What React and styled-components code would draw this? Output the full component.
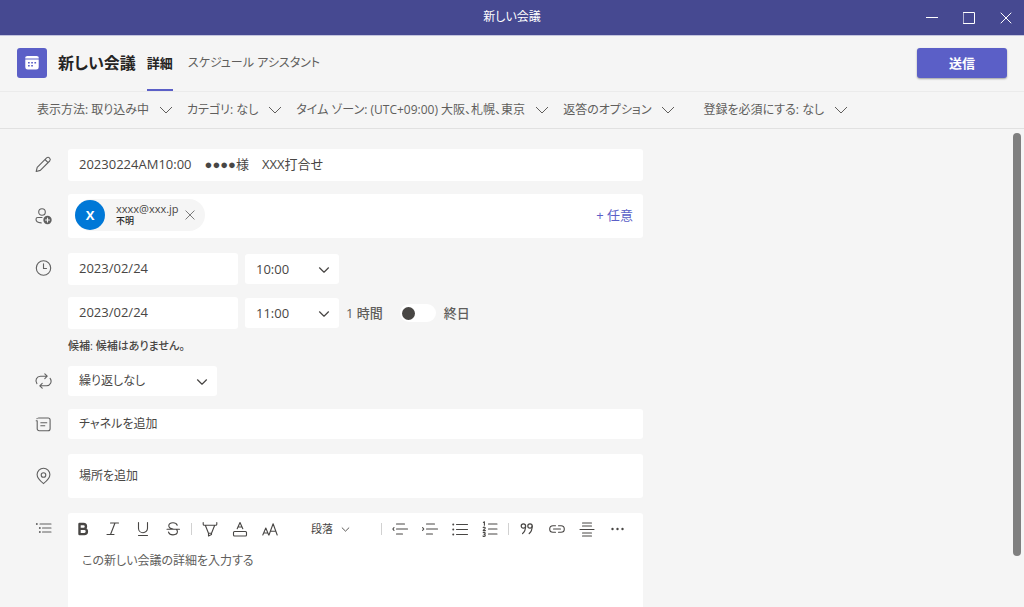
import React from "react";
import styled, { createGlobalStyle } from "styled-components";

const GlobalStyle = createGlobalStyle`
  *, *::before, *::after {
    box-sizing: border-box;
  }

  body {
    margin: 0;
    background-color: #f5f5f5;
    color: #484644;
    font-family: "Open Sans", "Liberation Sans", "Noto Sans CJK JP", sans-serif;
    font-size: 13px;
    line-height: 20px;
    font-feature-settings: "palt";
  }

  button, input, select, textarea {
    margin: 0;
    padding: 0;
    border: 0;
    background: none;
    color: inherit;
    font: inherit;
    font-feature-settings: inherit;
  }

  h1 {
    margin: 0;
  }
`;

const Window = styled.div`
  display: flex;
  flex-direction: column;
  height: 100vh;
  overflow: hidden;
`;

const TitleBar = styled.div`
  display: grid;
  grid-template-columns: 1fr auto 1fr;
  align-items: center;
  flex: none;
  height: 35px;
  background-color: #464991;
  color: #ffffff;
`;

const TitleText = styled.div`
  grid-column: 2;
  padding-bottom: 2px;
  font-size: 12px;
`;

const WindowControls = styled.div`
  display: flex;
  justify-content: flex-end;
`;

const WindowButton = styled.button`
  display: flex;
  align-items: center;
  justify-content: center;
  width: 37px;
  height: 32px;
`;

const Header = styled.header`
  display: flex;
  align-items: center;
  flex: none;
  height: 57px;
  padding: 0 17px;
  border-bottom: 1px solid #ebebeb;
  box-shadow: inset 0 1px 0 #c3c4de;
`;

const AppBadge = styled.div`
  display: flex;
  align-items: center;
  justify-content: center;
  width: 30px;
  height: 30px;
  margin-right: 11px;
  background-color: #5b5fc7;
  border-radius: 3px;
  color: #ffffff;
`;

const Heading = styled.h1`
  margin-right: 11px;
  color: #252423;
  font-size: 16px;
  font-weight: 600;
  line-height: 24px;
`;

const Tabs = styled.nav`
  display: flex;
  flex: 1;
  align-self: stretch;
  gap: 15px;
`;

const Tab = styled.button`
  border-top: 2px solid transparent;
  border-bottom: 2px solid ${({ $active }) => ($active ? "#5b5fc7" : "transparent")};
  color: ${({ $active }) => ($active ? "#252423" : "#605e5c")};
  font-size: ${({ $active }) => ($active ? 13 : 12)}px;
  font-weight: ${({ $active }) => ($active ? 600 : 400)};
`;

const SendButton = styled.button`
  width: 90px;
  height: 30px;
  background-color: #5b5fc7;
  border-radius: 3px;
  box-shadow: 0 1px 2px rgba(0, 0, 0, 0.35);
  color: #ffffff;
  font-weight: 700;
`;

const OptionBar = styled.div`
  display: flex;
  align-items: center;
  flex: none;
  gap: 14px;
  height: 37px;
  padding: 0 37px;
  border-bottom: 1px solid #e1e1e1;
`;

const OptionButton = styled.button`
  display: flex;
  align-items: center;
  gap: 10px;
  color: #605e5c;
  font-size: 12px;
  white-space: nowrap;

  &:last-child {
    margin-left: 14px;
  }
`;

const Body = styled.main`
  display: flex;
  flex: 1;
  min-height: 0;
  overflow: hidden;
`;

const Form = styled.form`
  flex: 1;
  padding: 20px 24px 0 34px;
`;

const Row = styled.div`
  display: flex;
  max-width: 609px;
  margin-bottom: ${({ $loose }) => ($loose ? 15 : 13)}px;
`;

const RowIcon = styled.div`
  display: flex;
  align-items: center;
  flex: none;
  width: 34px;
  height: ${({ $height }) => $height}px;
  color: #616161;
`;

const RowContent = styled.div`
  flex: 1;
  min-width: 0;
`;

const TextField = styled.input`
  display: block;
  width: ${({ $width }) => $width || "100%"};
  height: ${({ $height }) => $height || 32}px;
  padding: 0 11px 3px;
  background-color: #ffffff;
  border-radius: 3px;

  &::placeholder {
    color: #484644;
    font-size: 12px;
    opacity: 1;
  }
`;

const Attendees = styled.div`
  display: flex;
  align-items: center;
  justify-content: space-between;
  height: 44px;
  padding: 0 10px 2px 7px;
  background-color: #ffffff;
  border-radius: 3px;
`;

const Chip = styled.div`
  display: flex;
  align-items: center;
  height: 32px;
  padding-right: 10px;
  background-color: #f5f5f5;
  border-radius: 16px;
`;

const Avatar = styled.div`
  width: 30px;
  height: 30px;
  margin-right: 11px;
  background-color: #0078d7;
  border-radius: 50%;
  color: #ffffff;
  font-weight: 700;
  line-height: 30px;
  text-align: center;
`;

const ChipText = styled.div`
  font-size: 11px;
  line-height: 12px;
`;

const ChipStatus = styled.div`
  color: #252423;
  font-size: 9px;
  font-weight: 500;
  line-height: 12px;
`;

const ChipClose = styled.button`
  display: flex;
  margin-left: 6px;
  color: #616161;
`;

const OptionalButton = styled.button`
  color: #5b5fc7;
`;

const TimeLine = styled.div`
  display: flex;
  align-items: center;
  gap: 7px;
  margin-bottom: ${({ $last }) => ($last ? 10 : 12)}px;
`;

const SelectWrap = styled.div`
  position: relative;
  width: ${({ $width }) => $width}px;
  color: #484644;

  & svg {
    position: absolute;
    top: 10px;
    right: 9px;
    pointer-events: none;
  }
`;

const SelectField = styled.select`
  appearance: none;
  display: block;
  width: 100%;
  height: 30px;
  padding: 0 11px;
  background-color: #ffffff;
  border-radius: 3px;
  font-size: ${({ $small }) => ($small ? 12 : 13)}px;
`;

const Duration = styled.span`
  color: #605e5c;
  font-weight: 500;
`;

const AllDay = styled.label`
  display: flex;
  align-items: center;
  gap: 8px;
  margin-left: 10px;
  color: #605e5c;
  font-weight: 500;
`;

const Toggle = styled.input`
  appearance: none;
  display: flex;
  align-items: center;
  width: 36px;
  height: 18px;
  padding: 0 2px;
  background-color: #ffffff;
  border-radius: 9px;

  &::before {
    content: "";
    width: 13px;
    height: 13px;
    background-color: #484644;
    border-radius: 50%;
  }

  &:checked {
    justify-content: flex-end;
  }
`;

const Hint = styled.div`
  color: #484644;
  font-size: 11px;
  font-weight: 500;
  line-height: 14px;
`;

const Editor = styled.div`
  background-color: #ffffff;
  border-radius: 3px;
`;

const Toolbar = styled.div`
  display: flex;
  align-items: center;
  height: 32px;
  color: #484644;
`;

const ToolButton = styled.button`
  display: flex;
  align-items: center;
  justify-content: center;
  width: 30px;
  height: 30px;
`;

const Separator = styled.div`
  width: 1px;
  height: 12px;
  margin: 0 3px;
  background-color: #d1d1d1;
`;

const ParagraphButton = styled.button`
  display: flex;
  align-items: center;
  gap: 8px;
  width: 93px;
  padding-left: 26px;
  font-size: 11px;
`;

const EditorText = styled.textarea`
  display: block;
  width: 100%;
  height: 160px;
  padding: 6px 14px;
  font-size: 12px;
  resize: none;

  &::placeholder {
    color: #605e5c;
    opacity: 1;
  }
`;

const ScrollTrack = styled.div`
  flex: none;
  width: 11px;
  padding: 4px 0;
`;

const ScrollThumb = styled.div`
  width: 8px;
  height: 90%;
  background-color: #7f7f7f;
  border-radius: 4px;
`;

const Icon = ({ size = 18, box = 18, children, ...rest }) => (
  <svg
    width={size}
    height={size}
    viewBox={`0 0 ${box} ${box}`}
    fill="none"
    stroke="currentColor"
    strokeWidth="1.1"
    strokeLinecap="round"
    strokeLinejoin="round"
    aria-hidden="true"
    {...rest}
  >
    {children}
  </svg>
);

const WideChevron = () => (
  <svg width="14" height="8" viewBox="0 0 14 8" fill="none" stroke="currentColor" aria-hidden="true">
    <path d="M1 1l6 6 6-6" />
  </svg>
);

const Chevron = ({ width = 12 }) => (
  <svg
    width={width}
    height={width}
    viewBox="0 0 12 12"
    fill="none"
    stroke="currentColor"
    strokeWidth="1.2"
    strokeLinecap="round"
    strokeLinejoin="round"
    aria-hidden="true"
  >
    <path d="M1.500 3.800L6 8.200l4.500-4.400" />
  </svg>
);

const CalendarIcon = () => (
  <svg width="14" height="14" viewBox="0 0 14 14" fill="currentColor" aria-hidden="true">
    <path d="M2.500 0h9a2.200 2.200 0 0 1 2.200 2.600H.3A2.200 2.200 0 0 1 2.500 0z" />
    <path
      fillRule="evenodd"
      d="M.3 3.600h13.400v7.600a2.400 2.400 0 0 1-2.400 2.400H2.700a2.400 2.400 0 0 1-2.400-2.400zM3 6v1.600h1.700V6zM6.200 6v1.600h1.700V6zM9.400 6v1.600h1.700V6zM3 9v1.600h1.700V9zM6.200 9v1.600h1.700V9z"
    />
  </svg>
);

const PencilIcon = () => (
  <Icon>
    <path d="M2.200 16.500l1-4.200L12.600 2.900a2.200 2.200 0 0 1 3.100 3.100L6.300 15.400zM11 4.500l3.100 3.100" />
  </Icon>
);

const AddPersonIcon = () => (
  <Icon>
    <circle cx="8" cy="5" r="3.300" />
    <path d="M8 10.500H3.800A1.800 1.800 0 0 0 2 12.300c0 2.400 2.200 3.500 5.200 3.600" />
    <circle cx="13.500" cy="13" r="4.200" fill="currentColor" stroke="none" />
    <path d="M13.500 11v4M11.500 13h4" stroke="#f5f5f5" />
  </Icon>
);

const ClockIcon = () => (
  <Icon>
    <circle cx="9.500" cy="9" r="7.200" />
    <path d="M9.500 4.800v4.700h3" />
  </Icon>
);

const RepeatIcon = () => (
  <Icon>
    <path d="M10.800 1.800l2.400 2.400-2.400 2.400M13 4.200H6.500a4.600 4.600 0 0 0-3.600 7.400" />
    <path d="M8.200 11.400l-2.400 2.400 2.400 2.400M6 13.800h6.500a4.600 4.600 0 0 0 3.600-7.400" />
  </Icon>
);

const ChannelIcon = () => (
  <Icon>
    <path d="M3.200 6v7.800a2 2 0 0 0 2 2h8.900a2 2 0 0 0 2-2V5a2 2 0 0 0-2-2H4.500M2.200 5.800h1M3 3.600l.2-.2M6.800 7.700h6M6.800 10.700h4" />
  </Icon>
);

const PinIcon = () => (
  <Icon>
    <path d="M9.500 16.600c-1.400-1.100-6.400-4.800-6.400-9a6.400 6.400 0 0 1 12.800 0c0 4.200-5 7.900-6.400 9z" />
    <circle cx="9.500" cy="8" r="2.300" />
  </Icon>
);

const DetailsIcon = () => (
  <Icon>
    <path d="M6 5h11M8.500 9H17M8.500 13H17" />
    <path d="M2.800 5h.1M5.800 9h.1M5.800 13h.1" strokeWidth="1.800" />
  </Icon>
);

const BoldIcon = () => (
  <Icon size={16} box={16} strokeWidth="2.400">
    <path d="M4.500 3h4a2.400 2.400 0 0 1 0 4.900h-4zM4.500 7.900h4.800a2.600 2.600 0 0 1 0 5.200H4.500z" />
  </Icon>
);

const ItalicIcon = () => (
  <Icon size={16} box={16}>
    <path d="M5.500 2h8M2 13.500h7M10 2L5.500 13.500" />
  </Icon>
);

const UnderlineIcon = () => (
  <Icon size={16} box={16}>
    <path d="M3.500 1.500v5.700a4.500 4.500 0 0 0 9 0V1.500M3.500 14.500h9" />
  </Icon>
);

const StrikeIcon = () => (
  <Icon size={16} box={16}>
    <path d="M12.200 4.200C11.600 2.500 10 1.700 8 1.700c-2.400 0-4.200 1.200-4.200 3.100 0 1.800 1.300 2.700 4.200 3.300M2 8.200h12.500M11.500 8.500c.6.600.9 1.300.9 2.100 0 2-1.900 3.300-4.400 3.300-2.200 0-3.900-1-4.500-2.800" />
  </Icon>
);

const HighlightIcon = () => (
  <Icon size={16} box={16}>
    <path d="M1.200 1.500v1.700a1 1 0 0 0 1 1h11.600a1 1 0 0 0 1-1V1.500M3.300 4.200l3.200 8h3l3.200-8M6.500 12.200v2.800l3-1.500v-1.300" />
  </Icon>
);

const FontColorIcon = () => (
  <Icon size={16} box={16}>
    <path d="M5.200 7.800L8 1.500l2.800 6.300M6 6h4" />
    <rect x="1.500" y="10.500" width="13" height="4.500" rx="1" />
  </Icon>
);

const FontSizeIcon = () => (
  <Icon size={16} box={16}>
    <path d="M.8 14l3-7 2.900 7M1.700 12h4.100M7 14l4.100-11.300L15.200 14M8.400 10.300h5.400" />
  </Icon>
);

const OutdentIcon = () => (
  <Icon size={16} box={16}>
    <path d="M4.500 3h8M4.500 8h11M4.500 13h6M2 6.700L.8 8 2 9.300" />
  </Icon>
);

const IndentIcon = () => (
  <Icon size={16} box={16}>
    <path d="M4.500 3h8M4.500 8h11M4.500 13h6M.6 6.700L1.800 8 .6 9.300" />
  </Icon>
);

const BulletListIcon = () => (
  <Icon size={16} box={16}>
    <path d="M4.500 3.500h11M4.500 8.500h11M4.500 13.500h11" />
    <path d="M1.200 3.500h.1M1.200 8.500h.1M1.200 13.500h.1" strokeWidth="1.900" />
  </Icon>
);

const NumberListIcon = () => (
  <Icon size={16} box={16}>
    <path d="M6.500 3h8.500M6.500 8h8.500M6.500 13h8.500" />
    <path d="M1.400 1.400l1-.6v3.500M1.200 6.600c.6-.8 2.200-.5 2 .6-.1.900-1.900 1.400-2 2.400h2.200M1.200 11.700c.8-.7 2.200-.3 2 .7-.1.700-.6.900-1.200.9 1.600 0 1.800 1.900.2 2.100-.500 0-.9-.1-1.200-.4" />
  </Icon>
);

const QuoteIcon = () => (
  <Icon size={16} box={16} strokeWidth="1.200">
    <circle cx="4.400" cy="5" r="2.200" />
    <path d="M6.600 5c0 3.200-.8 5.700-3 7.500" />
    <circle cx="11" cy="5" r="2.200" />
    <path d="M13.200 5c0 3.200-.8 5.700-3 7.500" />
  </Icon>
);

const LinkIcon = () => (
  <Icon size={16} box={16}>
    <path d="M6.500 4.700H4a3.300 3.300 0 0 0 0 6.600h2.500M9.500 4.700H12a3.300 3.300 0 0 1 0 6.600H9.500M4.500 8h7" />
  </Icon>
);

const AlignIcon = () => (
  <Icon size={16} box={16}>
    <path d="M3.500 2h9M3.500 5h9M1 8.500h14M3.500 12h9M3.500 15h9" />
  </Icon>
);

const MoreIcon = () => (
  <Icon size={16} box={16} fill="currentColor" stroke="none">
    <circle cx="3.500" cy="8" r="1.200" />
    <circle cx="8.500" cy="8" r="1.200" />
    <circle cx="13.500" cy="8" r="1.200" />
  </Icon>
);

const CloseIcon = ({ size = 12 }) => (
  <Icon size={size} box={12} strokeWidth="1">
    <path d="M1 1l10 10M11 1L1 11" />
  </Icon>
);

const options = [
  "表示方法: 取り込み中",
  "カテゴリ: なし",
  "タイム ゾーン: (UTC+09:00) 大阪、札幌、東京",
  "返答のオプション",
  "登録を必須にする: なし",
];

const textTools = [
  ["太字", BoldIcon],
  ["斜体", ItalicIcon],
  ["下線", UnderlineIcon],
  ["取り消し線", StrikeIcon],
];

const colorTools = [
  ["蛍光ペン", HighlightIcon],
  ["フォントの色", FontColorIcon],
  ["フォント サイズ", FontSizeIcon],
];

const listTools = [
  ["インデント解除", OutdentIcon],
  ["インデント", IndentIcon],
  ["箇条書き", BulletListIcon],
  ["段落番号", NumberListIcon],
];

const insertTools = [
  ["引用", QuoteIcon],
  ["リンク", LinkIcon],
  ["水平線", AlignIcon],
  ["その他", MoreIcon],
];

const Tools = ({ items }) =>
  items.map(([label, ToolIcon]) => (
    <ToolButton key={label} type="button" aria-label={label}>
      <ToolIcon />
    </ToolButton>
  ));

const Select = ({ label, value, width, small }) => (
  <SelectWrap $width={width}>
    <SelectField aria-label={label} defaultValue={value} $small={small}>
      <option value={value}>{value}</option>
    </SelectField>
    <Chevron />
  </SelectWrap>
);

const App = () => {
  return (
    <>
      <GlobalStyle />
      <Window>
        <TitleBar>
          <TitleText>新しい会議</TitleText>
          <WindowControls>
            <WindowButton aria-label="最小化">
              <Icon size={12} box={12} strokeWidth="1">
                <path d="M0 5.500h12" />
              </Icon>
            </WindowButton>
            <WindowButton aria-label="最大化">
              <Icon size={12} box={12} strokeWidth="1">
                <path d="M.5.5h11v11H.5z" />
              </Icon>
            </WindowButton>
            <WindowButton aria-label="閉じる">
              <CloseIcon />
            </WindowButton>
          </WindowControls>
        </TitleBar>
        <Header>
          <AppBadge>
            <CalendarIcon />
          </AppBadge>
          <Heading>新しい会議</Heading>
          <Tabs>
            <Tab $active>詳細</Tab>
            <Tab>スケジュール アシスタント</Tab>
          </Tabs>
          <SendButton>送信</SendButton>
        </Header>
        <OptionBar>
          {options.map((option) => (
            <OptionButton key={option}>
              {option}
              <WideChevron />
            </OptionButton>
          ))}
        </OptionBar>
        <Body>
          <Form>
            <Row>
              <RowIcon $height={30}>
                <PencilIcon />
              </RowIcon>
              <RowContent>
                <TextField aria-label="タイトル" defaultValue="20230224AM10:00　●●●●様　XXX打合せ" />
              </RowContent>
            </Row>
            <Row $loose>
              <RowIcon $height={44}>
                <AddPersonIcon />
              </RowIcon>
              <RowContent>
                <Attendees>
                  <Chip>
                    <Avatar>X</Avatar>
                    <ChipText>
                      xxxx@xxx.jp
                      <ChipStatus>不明</ChipStatus>
                    </ChipText>
                    <ChipClose type="button" aria-label="削除">
                      <CloseIcon size={10} />
                    </ChipClose>
                  </Chip>
                  <OptionalButton type="button">+ 任意</OptionalButton>
                </Attendees>
              </RowContent>
            </Row>
            <Row>
              <RowIcon $height={30}>
                <ClockIcon />
              </RowIcon>
              <RowContent>
                <TimeLine>
                  <TextField aria-label="開始日" $width="170px" defaultValue="2023/02/24" />
                  <Select label="開始時刻" value="10:00" width={94} />
                </TimeLine>
                <TimeLine $last>
                  <TextField aria-label="終了日" $width="170px" defaultValue="2023/02/24" />
                  <Select label="終了時刻" value="11:00" width={94} />
                  <Duration>1 時間</Duration>
                  <AllDay>
                    <Toggle type="checkbox" />
                    終日
                  </AllDay>
                </TimeLine>
                <Hint>候補: 候補はありません。</Hint>
              </RowContent>
            </Row>
            <Row>
              <RowIcon $height={30}>
                <RepeatIcon />
              </RowIcon>
              <RowContent>
                <Select label="繰り返し" value="繰り返しなし" width={149} small />
              </RowContent>
            </Row>
            <Row $loose>
              <RowIcon $height={30}>
                <ChannelIcon />
              </RowIcon>
              <RowContent>
                <TextField aria-label="チャネル" $height={30} placeholder="チャネルを追加" />
              </RowContent>
            </Row>
            <Row $loose>
              <RowIcon $height={44}>
                <PinIcon />
              </RowIcon>
              <RowContent>
                <TextField aria-label="場所" $height={44} placeholder="場所を追加" />
              </RowContent>
            </Row>
            <Row>
              <RowIcon $height={30}>
                <DetailsIcon />
              </RowIcon>
              <RowContent>
                <Editor>
                  <Toolbar>
                    <Tools items={textTools} />
                    <Separator />
                    <Tools items={colorTools} />
                    <ParagraphButton type="button">
                      段落
                      <Chevron width={9} />
                    </ParagraphButton>
                    <Separator />
                    <Tools items={listTools} />
                    <Separator />
                    <Tools items={insertTools} />
                  </Toolbar>
                  <EditorText aria-label="詳細" placeholder="この新しい会議の詳細を入力する" />
                </Editor>
              </RowContent>
            </Row>
          </Form>
          <ScrollTrack>
            <ScrollThumb />
          </ScrollTrack>
        </Body>
      </Window>
    </>
  );
};

export default App;
